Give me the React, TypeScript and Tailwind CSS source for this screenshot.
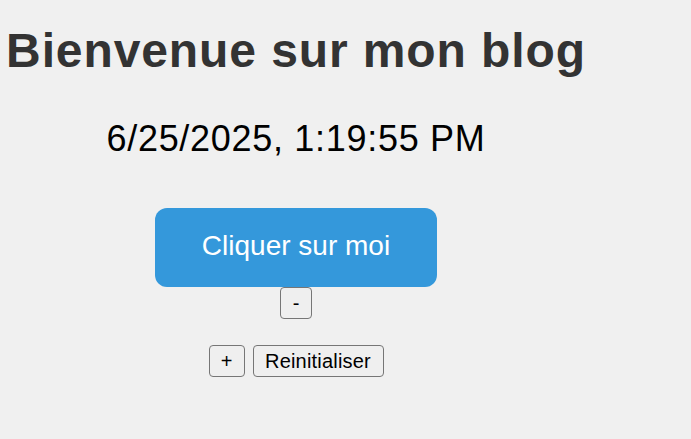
import { useState } from 'react';

export default function App() {
  const [count, setCount] = useState(0);

  return (
    <div className="min-h-[439px] bg-[#f0f0f0] font-['Liberation_Sans',Arial,sans-serif]">
      <div className="w-[592px] flex flex-col items-center text-center">
        <h1 className="mt-[23px] text-[48px] leading-[55px] font-bold text-[#333333] tracking-[0.9px] whitespace-nowrap">
          Bienvenue sur mon blog
        </h1>
        <p className="mt-[40px] text-[36px] leading-[41px] text-black tracking-[0.7px] whitespace-nowrap">
          6/25/2025, 1:19:55 PM
        </p>
        <button
          onClick={() => setCount(count + 1)}
          className="mt-[49px] w-[282px] h-[79px] rounded-xl bg-[#3498db] text-white text-[28px] leading-[32px] pb-[3px] flex items-center justify-center"
        >
          Cliquer sur moi
        </button>
        <button
          onClick={() => setCount(count - 1)}
          className="w-[32px] h-[32px] border border-[#767676] rounded bg-[#efefef] text-[20px] leading-[23px] text-black flex items-center justify-center"
        >
          -
        </button>
        <div className="mt-[26px] flex gap-2">
          <button
            onClick={() => setCount(count + 1)}
            className="w-[36px] h-[32px] border border-[#767676] rounded bg-[#efefef] text-[20px] leading-[23px] text-black flex items-center justify-center"
          >
            +
          </button>
          <button
            onClick={() => setCount(0)}
            className="w-[131px] h-[32px] border border-[#767676] rounded bg-[#efefef] text-[20px] leading-[23px] text-black tracking-[0.2px] flex items-center justify-center"
          >
            Reinitialiser
          </button>
        </div>
      </div>
    </div>
  );
}
